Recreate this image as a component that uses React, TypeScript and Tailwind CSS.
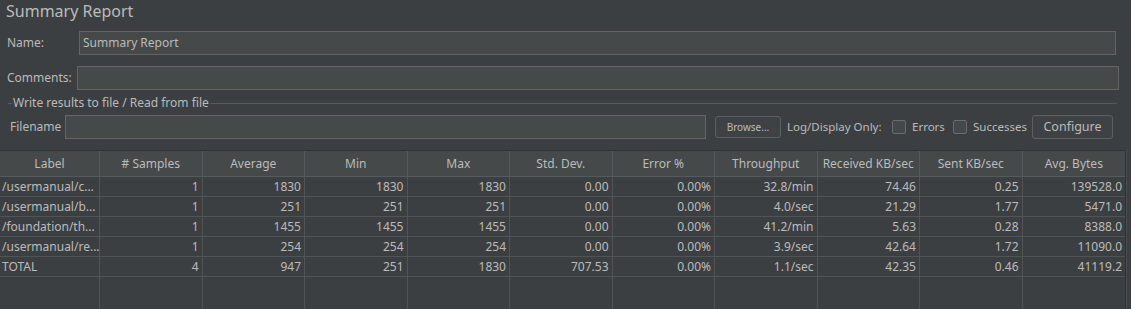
import React from "react";

const headers = ["Label", "# Samples", "Average", "Min", "Max", "Std. Dev.", "Error %", "Throughput", "Received KB/sec", "Sent KB/sec", "Avg. Bytes"];
const rows: string[][] = [
  ["/usermanual/c...", "1", "1830", "1830", "1830", "0.00", "0.00%", "32.8/min", "74.46", "0.25", "139528.0"],
  ["/usermanual/b...", "1", "251", "251", "251", "0.00", "0.00%", "4.0/sec", "21.29", "1.77", "5471.0"],
  ["/foundation/th...", "1", "1455", "1455", "1455", "0.00", "0.00%", "41.2/min", "5.63", "0.28", "8388.0"],
  ["/usermanual/re...", "1", "254", "254", "254", "0.00", "0.00%", "3.9/sec", "42.64", "1.72", "11090.0"],
  ["TOTAL", "4", "947", "251", "1830", "707.53", "0.00%", "1.1/sec", "42.35", "0.46", "41119.2"],
];

function Checkbox() {
  return <span className="inline-block w-[14px] h-[14px] border border-[#6b6b6b] rounded-[2px] bg-[#43494a]" />;
}

const gridCols = "grid grid-cols-[100px_repeat(10,minmax(0,1fr))]";

export default function App() {
  return (
    <div className="w-[1131px] h-[309px] bg-[#3c3f41] text-[#bbbbbb] overflow-hidden flex flex-col text-[12px] leading-[16px]" style={{ fontFamily: '"Noto Sans", "Open Sans", sans-serif' }}>
      <div className="pl-[6px] pt-[1px] h-[26px] text-[16px] leading-[20px]">Summary Report</div>
      <div className="flex items-center h-[24px] mt-[5px] pl-[7px] pr-[15px]">
        <span className="w-[72px] shrink-0">Name:</span>
        <div className="flex-1 h-[24px] border border-[#646464] bg-[#45494a] flex items-center px-[3px]">Summary Report</div>
      </div>
      <div className="flex items-center h-[24px] mt-[11px] pl-[7px] pr-[12px]">
        <span className="w-[70px] shrink-0">Comments:</span>
        <div className="flex-1 h-[24px] border border-[#646464] bg-[#45494a]" />
      </div>
      <div className="relative mt-[13px] mx-[8px] mr-[14px] border-t border-[#555a5c] h-[1px]">
        <span className="absolute left-[4px] top-[-9px] px-[1px] bg-[#3c3f41] leading-[16px] whitespace-nowrap">Write results to file / Read from file</span>
      </div>
      <div className="flex items-center h-[24px] mt-[11px] pl-[10px] pr-[18px] whitespace-nowrap">
        <span className="w-[55px] shrink-0">Filename</span>
        <div className="flex-1 min-w-0 h-[24px] border border-[#646464] bg-[#45494a]" />
        <div className="shrink-0 ml-[9px] w-[66px] h-[22px] border border-[#5e6060] rounded-[3px] bg-[#3f4244] flex items-center justify-center text-[10px]">Browse...</div>
        <span className="shrink-0 ml-[6px] w-[105px] text-[11.5px]">Log/Display Only:</span>
        <span className="shrink-0 flex items-center"><Checkbox /></span>
        <span className="shrink-0 ml-[6px] w-[41px] text-[11.5px]">Errors</span>
        <span className="shrink-0 flex items-center"><Checkbox /></span>
        <span className="shrink-0 ml-[6px] w-[59px] text-[11.5px]">Successes</span>
        <div className="shrink-0 w-[81px] h-[24px] border border-[#5e6060] rounded-[3px] bg-[#3f4244] flex items-center justify-center text-[12.5px]">Configure</div>
      </div>
      <div className="mt-[11px] flex-1 flex">
        <div className="w-[1126px] shrink-0 flex flex-col border-t border-r border-[#2f3233]">
          <div className={`${gridCols} h-[26px] bg-[#45494a] border-b border-[#555a5c]`}>
            {headers.map((h, i) => (
              <div key={i} className="flex items-center justify-center border-r border-[#55595b] last:border-r-0 whitespace-nowrap overflow-hidden">{h}</div>
            ))}
          </div>
          {rows.map((r, ri) => (
            <div key={ri} className={`${gridCols} h-[20px] border-b border-[#505455]`}>
              {r.map((c, ci) => (
                <div key={ci} className={`flex items-center border-r border-[#505455] last:border-r-0 whitespace-nowrap overflow-hidden ${ci === 0 ? "justify-start pl-[2px]" : "justify-end pr-[3px]"}`}>{c}</div>
              ))}
            </div>
          ))}
          <div className={`${gridCols} flex-1`}>
            {headers.map((_, i) => (
              <div key={i} className="border-r border-[#505455] last:border-r-0" />
            ))}
          </div>
        </div>
        <div className="flex-1 border-l border-[#4a4d4f]" />
      </div>
    </div>
  );
}
